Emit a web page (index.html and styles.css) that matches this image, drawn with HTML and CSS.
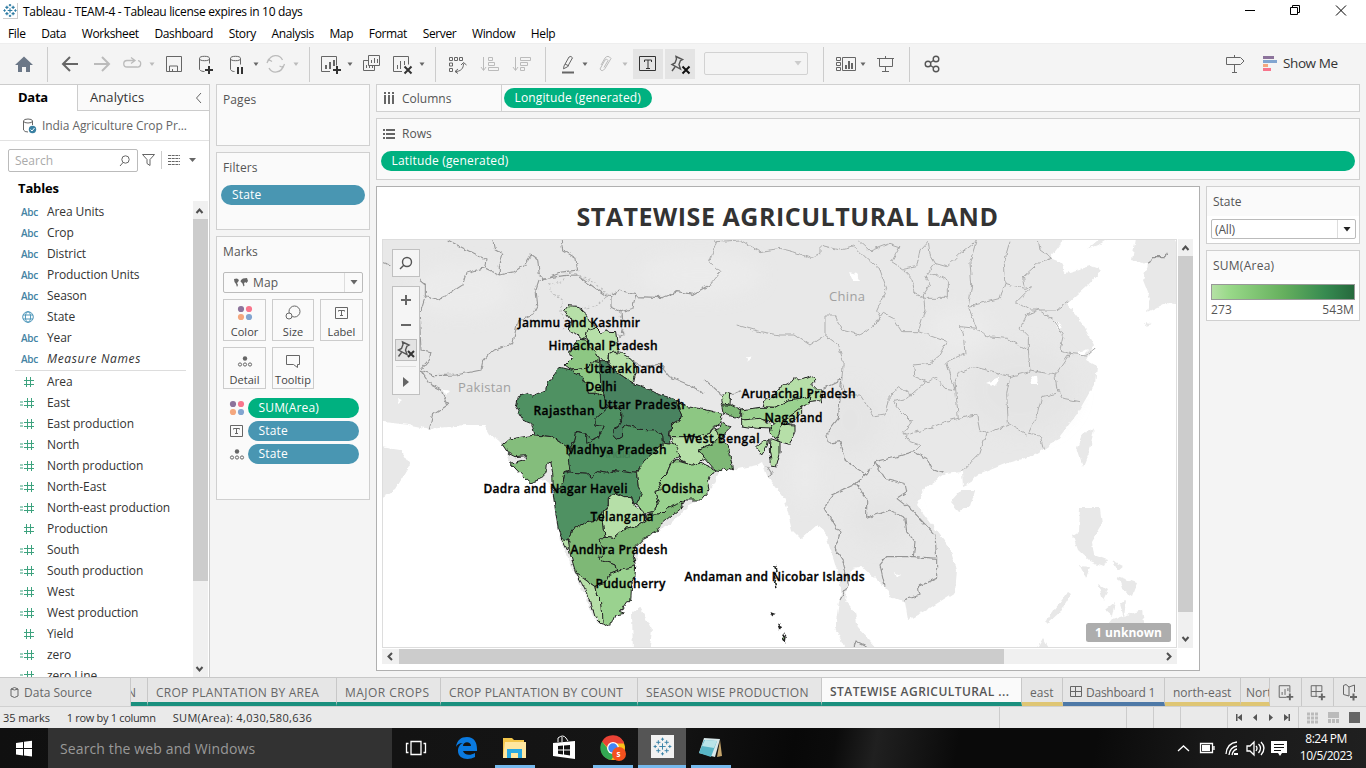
FILE: index.html
```html
<!DOCTYPE html>
<html lang="en">
<head>
<meta charset="utf-8">
<title>Tableau - TEAM-4</title>
<link rel="stylesheet" href="styles.css">
</head>
<body>
<svg class="defs" width="0" height="0">
  <symbol id="num" viewBox="0 0 16 12"><path d="M6.5 1v10M10.500 1v10M4 4.500h10M4 8.500h10"/></symbol>
  <symbol id="calc" viewBox="0 0 16 12"><path d="M7.500 1v10M11.500 1v10M4 4.500h10M4 8.500h10M0 5h3M0 8h3"/></symbol>
  <symbol id="globe" viewBox="0 0 16 12"><circle cx="8" cy="6" r="5.300"/><ellipse cx="8" cy="6" rx="2.600" ry="5.300"/><path d="M3 4h10M3 8h10"/></symbol>
  <symbol id="dots" viewBox="0 0 16 16"><circle cx="4" cy="4" r="3.100" fill="#8c739b"/><circle cx="12" cy="4" r="3.100" fill="#f8758c"/><circle cx="4" cy="12" r="3.100" fill="#f4a77e"/><circle cx="12" cy="12" r="3.100" fill="#82a5d0"/></symbol>
  <symbol id="label" viewBox="0 0 16 16"><path d="M1.500 2.500h12v11h-12zM4.500 6.500v-1h6v1M7.500 5.500v5M6 10.500h3" fill="none" stroke="#666"/></symbol>
  <symbol id="detail" viewBox="0 0 16 16"><circle cx="8" cy="5.500" r="2.200" fill="#666"/><g fill="none" stroke="#666"><circle cx="3" cy="11.500" r="1.600"/><circle cx="8" cy="11.500" r="1.600"/><circle cx="13" cy="11.500" r="1.600"/></g></symbol>
  <symbol id="tableau" viewBox="0 0 18 18"><path d="M9 6v6M6 9h6M5 3v4M3 5h4M13 3v4M11 5h4M5 11v4M3 13h4M13 11v4M11 13h4M9 .500v3M7.500 2h3M9 14.500v3M7.500 16h3M2 7.500v3M.500 9h3M16 7.500v3M14.500 9h3"/></symbol>
</svg>

<header class="titlebar">
  <svg class="logo" viewBox="0 0 18 18"><use href="#tableau"/></svg>
  <span class="title">Tableau - TEAM-4 - Tableau license expires in 10 days</span>
  <svg class="winctl" width="126" height="24" viewBox="1240 0 126 24"><path d="M1245 10.500h10M1290.500 7.500h7v7h-7zM1292.500 7.500v-2h7v7h-2M1336 5.500l10 10M1346 5.500l-10 10"/></svg>
</header>
<nav class="menu"><span>File</span><span>Data</span><span>Worksheet</span><span>Dashboard</span><span>Story</span><span>Analysis</span><span>Map</span><span>Format</span><span>Server</span><span>Window</span><span>Help</span></nav>

<div class="toolbar">
  <svg width="48" height="41" viewBox="0 43 48 41"><path d="M24 56.500l9 8.500h-3v7h-4v-5h-4v5h-4v-7h-3z" fill="#6b7787"/><path class="sep" d="M47.500 47v35"/></svg>
  <svg width="262" height="41" viewBox="48 43 262 41">
    <path class="i w2" d="M78 64H63M70 57l-7 7 7 7"/>
    <path class="l w2" d="M94 64h15M102 57l7 7-7 7"/>
    <path class="l" stroke-width="1.300" d="M134 60.500h-7a3.200 3.200 0 0 0 0 6.500h10a3 3 0 0 0 1-6.300M131 57.500l4 3-4 3"/><path class="lf" d="M149.500 62.500h5l-2.500 3.500z"/>
    <path class="i" d="M166.500 56.500h15v15h-15zM169.500 71v-5h8v5M172.500 71v-2"/>
    <ellipse class="i" cx="204.500" cy="58.500" rx="5" ry="2.200"/><path class="i" d="M199.500 58.500v11c1 1.500 3 2 5 2M209.500 58.500v5"/>
    <path class="k" d="M205 70h8M209 66v8"/>
    <ellipse class="i" cx="235.500" cy="58.500" rx="5" ry="2.200"/><path class="i" d="M230.500 58.500v11c1 1.500 2 2 4 2M240.500 58.500v6"/><path class="k" d="M238 67v7M242 67v7"/><path class="f" d="M253.500 62.500h5l-2.500 3.500z"/>
    <path class="l" stroke-width="1.300" d="M268.500 61a7.500 7.500 0 0 1 14-1M283 66a7.500 7.500 0 0 1-14 2M267 63l1.500-3.500 3.500 2M284.500 64l-1.500 3.500-3.500-1.500"/><path class="lf" d="M293.500 62.500h5l-2.500 3.500z"/>
    <path class="sep" d="M309.500 47v35"/>
  </svg>
  <svg width="126" height="41" viewBox="310 43 126 41">
    <path class="i" d="M330 71.500h-8.500v-15h15v9"/><path class="i w2" d="M326 69v-4M330 69v-7M334 66v-6"/><path class="k" d="M333 70h8M337 66v8"/><path class="f" d="M347.500 62.500h5l-2.500 3.500z"/>
    <path class="i" d="M368.500 55.500h11v10h-11zM371.500 63v-3M374.500 63v-5M377.500 63v-4M368 60.500h-4.500v10h11v-4.500M366.500 68v-3M369.500 68v-2M372.500 68v-2"/>
    <path class="i" d="M402 71.500h-8.500v-15h15v8M397.500 69v-4M400.500 69v-8M404.500 65v-4"/><path class="k" d="M404.500 66.500l7 7M411.500 66.500l-7 7"/><path class="f" d="M419.500 62.500h5l-2.500 3.500z"/>
    <path class="sep" d="M435.500 47v35"/>
  </svg>
  <svg width="110" height="41" viewBox="436 43 110 41">
    <path class="i" d="M449.500 57.500h3v3h-3zM454.500 57.500h3v3h-3zM459.500 57.500h3v3h-3zM449.500 63h3v3h-3zM449.500 68.500h3v3h-3zM455 71.500c6 0 8.500-3 8.500-8M461 65l2.500-2.500 3 2.500M458 69l-3 2.500 3 2"/>
    <path class="l" d="M483.500 57v13M481 67l2.500 3.500 2.500-3.500M488.500 57.500h4v3h-4zM488.500 62.500h6v3h-6zM488.500 67.500h10v3h-10z"/>
    <path class="l" d="M515.500 57v13M513 67l2.500 3.500 2.500-3.500M520.500 57.500h10v3h-10zM520.500 62.500h7v3h-7zM520.500 67.500h4v3h-4z"/>
    <path class="sep" d="M545.500 47v35"/>
  </svg>
  <svg width="87" height="41" viewBox="546 43 87 41">
    <path class="i" d="M564 66l5-9q2-1.500 3.500.8l-5 9-4 2zM565 64l4 2"/><path class="k g6" d="M562 72.500h12"/><path class="f" d="M582.500 62.500h5l-2.500 3.500z"/>
    <path class="l" d="M601 65l4-7q3-3.500 6 .5l-6 10q-3 4-5 .5l5-9q2-2 3 .5l-4 7"/><path class="lf" d="M622.500 62.500h5l-2.500 3.500z"/>
  </svg>
  <svg class="pressed" width="30" height="30" viewBox="633 49 30 30"><path d="M639.500 56.500h16v14h-16zM644.500 62v-2h7v2M648 60v8M646 68.500h4" fill="none" stroke="#333"/></svg>
  <svg class="pressed" width="30" height="30" viewBox="665 49 30 30"><path class="i pin" d="M676 56.500l6.500 3-2 1-1.500 4 1.500 4.500-8.500-4.500 3-1.500 1.500-4zM675 67l-3 4"/><path class="k bk" d="M682.500 66.500l7 7M689.500 66.500l-7 7"/></svg>
  <div class="tbselect"><svg width="8" height="5" viewBox="0 0 8 5"><path d="M.5 0h7L4 4.500z" fill="#ccc"/></svg></div>
  <svg width="102" height="41" viewBox="808 43 102 41">
    <path class="sep" d="M823.500 47v35M909.500 47v35"/>
    <path class="i" d="M836.500 57.500h4v3h-4zM836.500 62.500h4v3h-4zM836.500 67.500h4v3h-4zM842.500 57.500h13v13h-13z"/><path class="i w2" d="M846 69v-4M849 69v-8M852 69v-6"/><path class="f" d="M860.500 62.500h5l-2.500 3.500z"/>
    <path class="i" d="M877 58.500h17M879.500 58.500v8h13v-8M885.500 56v2M885.500 66.500v5M882 71.500h7"/>
  </svg>
  <svg width="40" height="41" viewBox="910 43 40 41"><g class="i pin"><circle cx="928" cy="64" r="2.800"/><circle cx="936" cy="59" r="2.800"/><circle cx="936" cy="69" r="2.800"/><path d="M930.500 62.500l3-2M930.500 65.500l3 2"/></g></svg>
  <svg class="right" width="60" height="41" viewBox="1220 43 60 41"><path class="i" d="M1226.500 57.500h14l3.500 3.500-3.500 3.500h-14zM1234.500 55v2M1234.500 65v7M1232 72.500h5"/><path fill="#8c739b" d="M1263 56h11v3h-11z"/><path fill="#82a5d0" d="M1263 60h14v3h-14z"/><path fill="#f4a77e" d="M1263 64h5v3h-5z"/><path fill="#f8758c" d="M1263 68h8v3h-8z"/></svg>
  <span class="showme">Show Me</span>
</div>

<main class="work">
  <aside class="datapane">
    <div class="ptabs"><b>Data</b><span>Analytics<svg width="8" height="12" viewBox="0 0 8 12"><path class="i" d="M6 1L1.500 6 6 11"/></svg></span></div>
    <div class="source"><svg width="16" height="16" viewBox="0 0 16 16"><ellipse class="i" cx="6" cy="3" rx="4.500" ry="2"/><path class="i" d="M1.500 3v9q1 2 4.500 2M10.500 3v4"/><circle cx="10.500" cy="11.500" r="3.700" fill="#3a81a3"/><path d="M8.500 11.500l1.500 1.500 2.500-3" fill="none" stroke="#fff"/></svg><span>India Agriculture Crop Pr...</span></div>
    <div class="searchrow"><div class="search"><span>Search</span><svg width="12" height="12" viewBox="0 0 12 12"><circle class="i" cx="6.500" cy="4.500" r="3.700"/><path class="i" d="M4 7.500L1 11"/></svg></div>
      <svg width="62" height="23" viewBox="139 149 62 23"><path class="i" d="M142.500 154.500h12l-4.500 5v6l-3-2v-4z"/><path d="M161.500 151v18" stroke="#ccc"/><path class="i" stroke-dasharray="3 .7" d="M168 155.500h12M168 158.500h12M168 161.500h12M168 164.500h12"/><path class="f" d="M189 158h7l-3.500 4z"/></svg></div>
    <h4>Tables</h4>
    <div class="fieldwrap">
      <ul class="fields">
        <li><i>Abc</i>Area Units</li><li><i>Abc</i>Crop</li><li><i>Abc</i>District</li><li><i>Abc</i>Production Units</li><li><i>Abc</i>Season</li>
        <li><svg class="dim"><use href="#globe"/></svg>State</li><li><i>Abc</i>Year</li><li class="it"><i>Abc</i>Measure Names</li>
        <li class="first"><svg><use href="#num"/></svg>Area</li><li><svg><use href="#calc"/></svg>East</li><li><svg><use href="#calc"/></svg>East production</li><li><svg><use href="#calc"/></svg>North</li><li><svg><use href="#calc"/></svg>North production</li><li><svg><use href="#calc"/></svg>North-East</li><li><svg><use href="#calc"/></svg>North-east production</li><li><svg><use href="#num"/></svg>Production</li><li><svg><use href="#calc"/></svg>South</li><li><svg><use href="#calc"/></svg>South production</li><li><svg><use href="#calc"/></svg>West</li><li><svg><use href="#calc"/></svg>West production</li><li><svg><use href="#num"/></svg>Yield</li><li><svg><use href="#calc"/></svg>zero</li><li><svg><use href="#calc"/></svg>zero Line</li>
      </ul>
      <div class="vbar"><svg width="15" height="17" viewBox="0 0 15 17"><path class="chev" d="M3.500 11L6.500 7.500 9.500 11"/></svg><div class="thumb"></div><svg width="15" height="17" viewBox="0 0 15 17"><path class="chev" d="M3.500 7L6.500 10.500 9.500 7"/></svg></div>
    </div>
  </aside>

  <section class="cards">
    <div class="card pages">Pages</div>
    <div class="card filters">Filters<div class="pill blue">State</div></div>
    <div class="card marks">Marks
      <div class="mtype"><svg width="14" height="10" viewBox="0 0 14 10"><path fill="#666" d="M0 1l3-.5L5 2 4 4 3 5l1 2-1 2-1-3L.5 4zM7 2l2-1.500 4-.5 1 3-1.500 2-1.500-1-1 1.500.5 2-1 1-1-3-2-2z"/></svg><span>Map</span><em><svg width="8" height="5" viewBox="0 0 8 5"><path d="M.5 0h7L4 4.500z" fill="#666"/></svg></em></div>
      <div class="mgrid">
        <div><svg><use href="#dots"/></svg>Color</div>
        <div><svg viewBox="0 0 16 16"><circle class="i" cx="9.500" cy="6.500" r="5.500"/><circle class="i lid" cx="4" cy="11" r="3"/></svg>Size</div>
        <div><svg><use href="#label"/></svg>Label</div>
        <div><svg><use href="#detail"/></svg>Detail</div>
        <div><svg viewBox="0 0 16 16"><path class="i" d="M1.500 2.500h13v9h-2v3l-4-3h-7z"/></svg>Tooltip</div>
      </div>
      <div class="enc"><svg><use href="#dots"/></svg><div class="pill green">SUM(Area)</div></div>
      <div class="enc"><svg><use href="#label"/></svg><div class="pill blue">State</div></div>
      <div class="enc"><svg><use href="#detail"/></svg><div class="pill blue">State</div></div>
    </div>
  </section>

  <section class="center">
    <div class="shelf cols"><div class="sl"><svg width="12" height="12" viewBox="0 0 12 12"><path stroke="#666" stroke-width="2" d="M2 0v2M6 0v2M10 0v2M2 3v9M6 3v9M10 3v9"/></svg>Columns</div><div class="pill green">Longitude (generated)</div></div>
    <div class="shelf rows"><div class="sl"><svg width="12" height="12" viewBox="0 0 12 12"><path stroke="#666" stroke-width="2" d="M0 2h2M0 6h2M0 10h2M3 2h9M3 6h9M3 10h9"/></svg>Rows</div><div class="pill green">Latitude (generated)</div></div>
    <div class="lower">
      <div class="viz">
        <h1>STATEWISE AGRICULTURAL LAND</h1>
        <div class="vizgrid">
          <div class="map">
          <svg width="795" height="409" viewBox="382 239 795 409">
            <defs>
              <filter id="rough" filterUnits="userSpaceOnUse" x="370" y="230" width="820" height="430"><feTurbulence type="fractalNoise" baseFrequency=".16" numOctaves="2" seed="4" result="n"/><feDisplacementMap in="SourceGraphic" in2="n" scale="5" xChannelSelector="R" yChannelSelector="G"/></filter>
              <filter id="soft"><feGaussianBlur stdDeviation="9"/></filter>
            </defs>
            <rect x="382" y="239" width="795" height="409" fill="#fff"/>
            <g class="land" filter="url(#rough)">
              <path d="M375 230V421L410 425 430 429 465 425 484 425 489 434 498 440 504 446 512 465 530 483 545 480 552 490 556 520 560 540 575 573 595 620 604 627 612 615 630 600 635 565 645 538 670 525 695 500 712 488 720 470 733 470 757 465 762 462 768 478 785 500 792 530 801 539 817 525 825 532 834 560 842 588 838 608 835 628 847 652H880L858 628 855 612 845 600 848 585 852 570 862 566 874 577 887 590 893 597 905 602 908 620 930 608 955 592 957 570 950 548 930 522 917 505 925 488 945 474 962 472 963 486 970 483 975 476 1005 464 1035 455 1057 440 1077 414 1095 383 1097 366 1086 360 1094 345 1083 325 1067 304 1087 286 1102 270 1090 266 1066 273 1060 262 1050 258 1060 245 1065 230Z"/>
              <path d="M375 446L400 450 410 465 395 490 375 502ZM1132 260L1137 232H1172L1185 255V305L1165 303 1147 312 1150 298 1143 280 1147 264ZM1087 249L1105 235H1115L1100 244ZM632 612L640 607 652 630 649 655H633ZM1077 448L1082 434 1094 428 1090 450 1083 467ZM950 502L960 491 975 491 970 507 958 511ZM1080 508H1100L1102 525 1092 542 1094 555 1107 560 1104 566 1090 561 1078 550 1073 536 1079 532ZM1080 566L1090 567 1086 578ZM1045 622L1068 592 1071 594 1060 612 1047 624ZM1098 584L1108 590 1103 600ZM1117 576L1137 583 1132 596 1122 590ZM1112 560L1124 566 1118 571ZM1105 610L1115 602 1112 616ZM1120 604L1126 600 1124 618ZM1112 620L1142 610 1145 628 1125 634 1104 630ZM1035 652L1043 638 1050 650ZM1144 323L1152 324 1146 326Z"/>
            </g>
            <g class="relief" filter="url(#soft)"><ellipse cx="1020" cy="390" rx="55" ry="45"/><ellipse cx="960" cy="330" rx="30" ry="22" class="hi"/><ellipse cx="460" cy="290" rx="50" ry="25" class="hi"/><ellipse cx="700" cy="275" rx="60" ry="22" class="hi"/><ellipse cx="850" cy="420" rx="30" ry="35"/><ellipse cx="805" cy="475" rx="10" ry="30" class="hi"/><ellipse cx="880" cy="520" rx="30" ry="25"/></g>
            <g filter="url(#rough)">
              <g fill="#fff"><path d="M849 272l8 2 4 7-8 0zM1055 321l7 5-5 4zM1077 352l12-3-6 6zM986 383l14-6-4 9zM1030 376l7 1 1 7-6 0zM443 389l6 2-3 3zM397 398l5 2-4 3zM853 568l12-2-3 5zM895 572l6 4-4 2zM746 357l8 1-6 3z"/></g>
              <!-- Borders of western and central Asia -->
              <g class="bd" transform="translate(376 235) scale(.333333)">
                <path d="M20 82L45 90M130 135L148 150 148 182 185 193 210 182 260 150 270 115 325 98 370 120 415 110 450 85 465 60 485 75 490 120 500 135 550 115 605 108 600 70 560 45 555 12M215 15L330 75 325 98M350 12L355 40 380 55 370 95 370 120M500 132L560 122 600 120 645 150 690 182 705 185 705 215 735 230 740 300 730 305M705 180L730 165 780 180 770 220 735 230M490 135L480 165 485 210 470 240 425 260 410 325 345 350 320 380 315 405 240 420 175 422 135 405M148 182L130 240 135 345 165 350 160 375 135 405 165 450 195 465 215 510 170 540 160 580M780 185L860 188 905 170 950 178 1000 150M740 360L800 395 850 388 880 425 940 450 985 475"/>
                <path class="dash" d="M570 120L560 140 520 150 530 175 560 195 555 230 570 260 560 290M600 120L660 145 695 182 655 215 610 222M730 230L745 300 715 300"/>
              </g>
              <!-- Chinese provinces and Indochina -->
              <g class="pv" transform="translate(780 235) scale(.333333)">
                <path d="M-212 -10L-190 20 -120 15 -60 50 0 40 40 50 95 70 120 55 120 30 180 45 225 35 260 70 300 105 320 160 290 225 300 245 280 275 240 300 185 285 165 240 135 240 135 300 90 330 45 300 0 300 -60 290 -130 270M-190 20L-212 80 -180 110 -212 150M235 15L270 48 330 25 360 35 335 80 370 103 410 95 420 45 445 18 450 60 465 85 435 125 450 150 430 180 435 225 415 290 365 290 340 250 310 235 280 275M370 103L395 130 405 175 435 190 505 190 505 140 465 115 440 120M465 85L500 95 540 55 590 15 570 80 575 150 565 215 590 280 540 275 550 300 555 355 500 380 515 430 525 465 495 460 470 430 440 440 405 425 400 390 450 385 475 365 500 320 415 290M565 215L660 190 675 145 670 90 690 20M675 145L735 160 755 155 710 200 750 225 830 225 865 200M735 155L730 125 780 80 815 70 780 45 775 15M775 225L740 240 720 280 745 305 745 345 750 410 690 425 640 410 580 395 535 415 525 440 535 550 495 560 460 575 380 600 370 595 395 560 355 520 340 500 380 490 440 440M590 280L620 305 680 310 745 345M770 220L825 260 850 300 840 345 870 355 825 420 750 405M825 420L830 460 850 490 900 500M830 475L785 485 770 545 745 595 780 600 790 640M870 355L920 360 945 340M690 425L680 475 685 565 740 600M535 550L590 540 600 590 620 595 685 570M620 590L600 655 545 710M135 300L175 330 190 380 185 440 200 480 240 480 285 545 315 540 325 490 355 455 395 480M370 595L390 620 420 630 400 650"/>
                <path class="bd" d="M185 430L175 550 140 595 145 625 180 620 200 680 260 720 285 680 350 665 400 650 440 670 455 700 490 712M180 435L130 460M260 715L220 750 155 780 135 820 180 895 165 940 190 980 205 1050 180 1095M225 745L260 790 260 850 330 825 375 850 380 890 405 920 400 965 320 965 300 990 315 1055M285 680L315 730 375 745 380 770 350 790 400 830 465 900 470 970 400 965M470 965L470 1030 415 1055 420 1080 370 1095M222 1235L228 1218 265 1236M1105 88L1120 65 1155 65 1162 50"/>
              </g>
              <path class="bd" d="M704 379L722 395 735 393 742 390M767 466L772 474 768 478"/>
            </g>
            <text class="country" x="829" y="301" textLength="36">China</text><text class="country" x="458" y="392" textLength="53">Pakistan</text>
            <!-- Indian states, filled by cultivated area -->
            <g filter="url(#rough)"><g class="st" transform="translate(480 290) scale(.333333)">
              <path class="g under" d="M300 330H440V470H280Z"/>
              <path class="a" d="M251 62L262 47 280 48 298 50 303 63 322 80 330 95 348 112 335 120 322 125 318 140 305 147 285 130 268 120 272 90Z"/>
              <path class="a" d="M322 122L348 114 362 128 378 120 388 127 407 128 412 165 420 185 400 187 385 195 382 215 370 215 355 200 345 185 325 165 318 145Z"/>
              <path class="c" d="M300 145L318 148 325 165 345 185 355 200 360 215 345 212 320 235 275 240 255 225 275 205 268 190 285 160Z"/>
              <path class="a" d="M385 195L400 187 425 190 450 205 468 225 470 240 460 280 430 260 400 240 385 215Z"/>
              <path class="c" d="M275 240L320 235 345 212 360 215 362 285 375 290 368 318 350 310 325 310 320 285 305 270 300 255 282 250Z"/>
              <path class="g" d="M240 232L275 240 282 250 300 255 320 285 325 310 350 310 370 318 385 350 345 385 345 405 370 410 355 445 335 452 320 430 290 425 285 450 270 478 240 455 215 440 165 435 155 400 130 390 108 355 115 320 145 310 155 318 200 300 205 275Z"/>
              <path class="h" d="M360 215L382 215 400 240 430 260 460 280 500 295 540 315 590 330 598 360 605 375 600 390 572 405 568 440 570 462 550 460 548 435 520 420 480 418 440 405 425 415 425 440 412 448 400 435 402 418 415 410 425 385 425 365 410 350 385 350 370 318 362 285Z"/>
              <path class="g" d="M385 350L410 350 425 365 425 385 415 410 402 418 400 435 412 448 425 440 425 415 440 405 480 418 520 420 548 435 550 460 530 480 495 510 480 530 470 550 400 542 380 550 355 545 335 562 320 550 255 545 270 478 285 450 290 425 320 430 320 460 355 445 370 410 345 405 345 385Z"/>
              <path class="g" d="M255 545L320 550 335 562 355 545 380 550 400 542 470 550 475 590 485 610 480 640 462 645 455 620 430 620 405 610 385 625 385 645 370 660 350 690 320 695 275 720 268 745 260 755 245 745 235 720 225 650 218 600 240 590 250 575Z"/>
              <path class="b" d="M550 460L570 462 590 460 595 480 600 500 575 515 560 550 535 575 545 600 525 605 535 640 520 665 490 670 470 640 485 610 475 590 470 550 480 530 495 510 530 480Z"/>
              <path class="d" d="M68 465L90 447 165 435 215 440 240 455 270 478 265 510 270 540 255 545 250 575 240 590 220 600 218 545 212 515 202 522 200 545 175 570 150 578 120 550 92 520 110 515 130 510 140 497 105 500 85 490Z"/>
              <path class="c" d="M590 330L620 350 655 355 700 365 725 370 725 385 715 405 695 415 690 430 650 440 605 440 570 440 572 405 600 390 605 375 598 360Z"/>
              <path class="a" d="M570 440L605 440 650 440 690 430 700 412 710 418 718 440 695 465 655 480 675 505 640 530 595 510 600 500 590 475Z"/>
              <path class="e" d="M725 395L750 410 735 425 725 445 745 470 755 520 757 540 747 535 740 542 732 535 725 542 705 540 675 505 655 480 695 465 718 440 705 420 720 415ZM725 345L755 345 785 360 780 385 750 375 730 370Z"/>
              <path class="a" d="M725 330L740 307 752 310 750 345 728 342Z"/>
              <path class="b" d="M575 515L600 515 635 525 660 520 705 540 690 560 685 575 690 600 665 630 615 630 600 645 560 655 540 675 500 675 520 665 535 640 525 605 545 600 535 575 560 550Z"/>
              <path class="a" d="M385 645L385 625 405 610 430 620 455 620 460 645 490 665 500 690 470 710 430 720 400 745 375 742 370 695 370 660Z"/>
              <path class="e" d="M375 742L400 745 430 720 470 710 500 690 500 675 540 675 560 655 600 640 615 632 600 655 540 705 530 725 490 745 465 770 460 800 467 830 440 835 410 845 405 825 380 815 355 805 370 790 360 745Z"/>
              <path class="e" d="M275 720L320 695 350 690 370 660 370 695 375 742 360 745 370 790 355 805 380 815 405 825 410 845 385 855 375 880 345 890 310 865 288 850 270 790 265 765 268 745Z"/>
              <path class="a" d="M245 745L265 750 268 770 262 780ZM288 850L310 865 345 890 350 920 365 935 370 970 370 1007 345 980 330 930 305 880Z"/>
              <path class="b" d="M345 890L375 880 385 855 410 845 440 835 467 828 465 860 455 880 452 935 440 935 420 965 435 970 405 975 395 1000 370 1008 365 935 350 920Z"/>
              <path class="a" d="M855 330L880 320 895 295 935 275 945 262 965 270 995 258 1008 270 995 285 1010 300 1030 300 1020 330 1025 342 1010 332 985 335 990 318 960 325 925 330 885 352 850 350Z"/>
              <path class="b" d="M785 360L840 352 885 352 925 330 960 325 990 318 985 340 960 355 940 370 925 395 910 420 900 445 885 445 875 430 870 415 885 400 860 390 810 388 785 390Z"/>
              <path class="a" d="M785 390L840 385 870 400 878 417 830 415 785 408ZM925 380L965 350 965 370 940 397 915 405ZM905 402L945 405 945 425 928 463 890 452 900 420ZM870 445L900 455 900 490 890 528 875 525 868 480ZM830 470L850 455 865 448 862 470 845 495 832 480Z"/>
              <path class="b isles" d="M884 828l4 12-3 14 3 12-4 12 4 14M876 970l8 3-4 5zM895 1005l8 4-4 7zM912 1035l6 8-2 12-6-10z"/>
            </g></g>
            <text x="605" y="458" class="country faint" textLength="26">India</text>
            <g class="lb">
              <text x="518" y="327" textLength="122">Jammu and Kashmir</text><text x="548.500" y="350" textLength="109">Himachal Pradesh</text><text x="585" y="373" textLength="78">Uttarakhand</text><text x="585.500" y="391" textLength="31">Delhi</text><text x="598.500" y="409" textLength="86">Uttar Pradesh</text><text x="533.500" y="415" textLength="61">Rajasthan</text><text x="565.500" y="454" textLength="101">Madhya Pradesh</text><text x="683.500" y="443" textLength="76">West Bengal</text><text x="741.500" y="398" textLength="114">Arunachal Pradesh</text><text x="764.500" y="422" textLength="58">Nagaland</text><text x="483.500" y="493" textLength="144">Dadra and Nagar Haveli</text><text x="661.500" y="493" textLength="42">Odisha</text><text x="590.500" y="521" textLength="63">Telangana</text><text x="570.500" y="554" textLength="97">Andhra Pradesh</text><text x="595.500" y="588" textLength="70">Puducherry</text><text x="684.500" y="581" textLength="180">Andaman and Nicobar Islands</text>
            </g>
            <rect x="392.500" y="249.500" width="27" height="27" class="ctl"/><rect x="392.500" y="286.500" width="27" height="108" class="ctl"/><rect x="395.500" y="339.500" width="21" height="21" fill="#e3e3e3" stroke="#bbb"/>
            <g class="i pin"><circle cx="407" cy="262" r="4.500"/><path d="M404 265l-4 4"/><path transform="translate(-273.500 285.500)" d="M676 56.500l6.500 3-2 1-1.500 4 1.500 4.500-8.500-4.500 3-1.500 1.500-4zM675 67l-3 4"/></g>
            <path class="k g6" d="M401 300h10M406 295v10M401 325h10"/><path class="k" d="M408 351l6 6M414 351l-6 6"/><path stroke="#ddd" d="M396 366.500h20"/><path fill="#666" d="M403 377l6 5-6 5z"/>
            <rect x="1086" y="623" width="85" height="19" rx="2.500" fill="#adadad"/><text x="1095" y="637" class="unk" textLength="67">1 unknown</text>
          </svg>
          </div>
          <div class="vbar mapv"><svg width="15" height="17" viewBox="0 0 15 17"><path class="chev" d="M4.500 11L7.500 7.500 10.500 11"/></svg><div class="thumb"></div><svg width="15" height="17" viewBox="0 0 15 17"><path class="chev" d="M4.500 6L7.500 9.500 10.500 6"/></svg></div>
          <div class="hbar"><svg width="17" height="15" viewBox="0 0 17 15"><path class="chev" d="M10 4L6.500 7.500 10 11"/></svg><div class="thumb"></div><svg width="17" height="15" viewBox="0 0 17 15"><path class="chev" d="M7 4l3.500 3.500L7 11"/></svg></div>
        </div>
      </div>
      <div class="side">
        <div class="leg statecard"><p>State</p><div class="dd"><span>(All)</span><em><svg width="8" height="5" viewBox="0 0 8 5"><path d="M.5 0h7L4 4.500z" fill="#222"/></svg></em></div></div>
        <div class="leg area"><p>SUM(Area)</p><div class="ramp"></div><div class="rng"><span>273</span><span>543M</span></div></div>
      </div>
    </div>
  </section>
</main>

<div class="tabs">
  <div class="ds"><svg width="9" height="13" viewBox="0 0 9 13"><path class="i" d="M1 3v7q3.500 3 7 0V3q-3.500-3-7 0q3.500 2 7 0"/></svg>Data Source</div>
  <div class="t nn"><span>N</span></div>
  <div class="t t1">CROP PLANTATION BY AREA</div><div class="t t2">MAJOR CROPS</div><div class="t t3">CROP PLANTATION BY COUNT</div><div class="t t4">SEASON WISE PRODUCTION</div><div class="t on">STATEWISE AGRICULTURAL ...</div><div class="t y t5">east</div><div class="t bl"><svg width="12" height="12" viewBox="0 0 12 12"><path class="i" d="M.5.5h11v10H.5zM5.500.5v10M.5 5.500h11"/></svg>Dashboard 1</div><div class="t y t6">north-east</div><div class="t y t7">Nort</div>
  <svg class="new" viewBox="1270 678 32 28"><path class="i" d="M1287 697.500h-7.500v-12h11v7M1282.500 695v-3M1285.500 695v-6M1288.500 691v-3"/><path class="k g6" d="M1287 697h7M1290.500 693.500v7"/></svg>
  <svg class="new" viewBox="1302 678 32 28"><path class="i" d="M1318 696.500h-6.500v-11h11v6M1316.500 685.500v11M1311.500 691.500h11"/><path class="k g6" d="M1319 697h7M1322.500 693.500v7"/></svg>
  <svg class="new last" viewBox="1334 678 32 28"><path class="i" d="M1349 696l-5.500-1.500v-9l2.500-1 3 2.500 5.500-2v7M1349 687v9"/><path class="k g6" d="M1350 697h7M1353.500 693.500v7"/></svg>
</div>
<footer class="status"><span class="s1">35 marks</span><span class="s2">1 row by 1 column</span><span class="s3">SUM(Area): 4,030,580,636</span>
  <svg width="367" height="21" viewBox="999 707 367 21"><path stroke="#ccc" d="M999.500 707v21M1126.500 707v21M1153.500 707v21M1180.500 707v21M1227.500 707v21M1298.500 707v21"/><path fill="#555" d="M1236 714h1.500v7h-1.500zM1242 714v7l-4.500-3.500zM1257 714v7l-4-3.500zM1269 714v7l4-3.500zM1284 714v7l4.500-3.500zM1288.500 714h1.500v7h-1.500z"/><path stroke="#bbb" stroke-width="3" stroke-dasharray="3 1" d="M1307 714h11M1307 718h11M1307 722h11"/><path fill="#bbb" d="M1328 712h11v6h-11zM1328 719h3v4h-3zM1332 719h3v4h-3zM1336 719h3v4h-3z"/><path fill="#666" d="M1349 712h11v11h-11z"/></svg>
</footer>
<div class="taskbar">
  <svg width="48" height="40" viewBox="0 728 48 40"><path fill="#fff" d="M16 743l7-1v6h-7zM24 741.800l8-1.100v7.300h-8zM16 749h7v6.500l-7-1zM24 749h8v7.500l-8-1.100z"/></svg>
  <div class="winsearch">Search the web and Windows</div>
  <svg width="246" height="40" viewBox="392 728 246 40">
    <path fill="none" stroke="#fff" stroke-width="1.300" d="M411 741.500h10v13h-10zM408.500 743.500h-2v9h2M423.500 743.500h2v9h-2"/>
    <path fill="#0a7ae0" d="M456 747c1-7 5-10 11-10 7 0 10 5 10 12v2h-14c1 4 7 5 12 2v4c-7 4-17 2-17-6 0-4 2-7 5-8-4 0-6 2-7 4zm7-1h8c0-5-8-5-8 0z"/>
    <path fill="#f3c64b" d="M503 738h9l2 2h10v18h-21z"/><path fill="#ffe7a0" d="M505 742h21v16h-23z"/><path fill="#29a9e2" d="M507 749h15v9h-4v-5h-7v5h-4z"/>
    <path fill="#fff" d="M553 743l22-2v18l-22-3z"/><path fill="none" stroke="#fff" d="M558 742v-4q5-4 8 0l2 3M562 742v-5"/><path fill="#111" d="M558 746l5-.5v4h-5zM564 745.500l6-.5v4.500h-6zM558 750.500h5v4l-5-.7zM564 750.500h6v5l-6-1z"/>
    <circle cx="613" cy="748" r="12" fill="#fbc11a"/><path fill="#e94235" d="M613 748h-5l-6-6.500a12.300 12.300 0 0 1 22 1v1h-11z"/><path fill="#33a853" d="M602 741.500a12.300 12.300 0 0 0 9 18.500l5-7-6-1.500z"/><circle cx="613" cy="748" r="6" fill="#fff"/><circle cx="613" cy="748" r="4.700" fill="#4285f4"/><circle cx="619" cy="754" r="7" fill="#f4511e"/><text x="616.500" y="757" fill="#fff" font-size="8" font-weight="bold">s</text>
    <path fill="#76b9ed" d="M495 765h40v3h-40zM593 765h40v3h-40z"/>
  </svg>
  <div class="app"><svg width="23" height="23" viewBox="-2 -2 22 22"><use href="#tableau" width="18" height="18"/></svg></div>
  <svg width="50" height="40" viewBox="686 728 50 40"><path fill="#d8e8ea" d="M704 738l16 1-5 18-16-4z"/><path fill="#58b5c6" d="M704 740l13 1-6 16-12-4z"/><path fill="#b9e4e9" d="M705 740l12 1-3 7-12-2z"/><path fill="#c6a56b" d="M717 757l3-17 2 16z"/><path fill="#76b9ed" d="M691 765h40v3h-40z"/></svg>
  <svg class="right" width="122" height="40" viewBox="1174 728 122 40"><g fill="none" stroke="#fff" stroke-width="1.300"><path d="M1178 751l5.500-5 5.500 5M1200.500 743.500h12v9h-12zM1214 746v4M1226 754q1-11 11-12M1229 755q1-8 8-9M1232 755q1-5 5-6M1247 746h3l4-4v13l-4-4h-3zM1256 746q2 2 0 5M1258.500 744q4 4 0 9M1261 742q6 6 0 13"/></g><path fill="#fff" d="M1202 745h8v6h-8zM1234 753h4v2h-4zM1271 741h16v12h-5l-2 3-2-3h-7z"/><path stroke="#111" d="M1274 744.500h10M1274 747.500h10M1274 750.500h7"/></svg>
  <div class="clock">8:24 PM<br>10/5/2023</div>
</div>
</body>
</html>
```
FILE: styles.css
```css
* { box-sizing: border-box; }
body { margin: 0; width: 1366px; height: 768px; overflow: hidden; background: #f4f4f4; font: 12px/15px "Open Sans", sans-serif; color: #333; display: flex; flex-direction: column; }
.defs { position: absolute; }
svg { flex: none; display: block; }
h1, h4, p, ul { margin: 0; padding: 0; }
.i { fill: none; stroke: #666; }
.pin { stroke-width: 1.400; stroke: #555; }
.lid { fill: #fafafa; }
.l { fill: none; stroke: #bbb; }
.w2 { stroke-width: 2; }
.f { fill: #666; }
.lf { fill: #bbb; }
.k { fill: none; stroke: #333; stroke-width: 2; }
.g6 { stroke: #666; }
.bk { stroke: #111; }
.sep { stroke: #ccc; }
.chev { fill: none; stroke: #505050; stroke-width: 2; }

.titlebar { height: 24px; background: #fff; display: flex; align-items: center; padding-left: 3px; color: #000; flex: none; }
.logo { width: 15px; height: 16px; border: 1px solid #ccc; border-width: 0 1px 1px 0; stroke: #2f7ca3; stroke-width: 1.500; margin-top: -2px; }
.title { margin: -1px 0 0 5px; font-size: 12px; letter-spacing: -.31px; }
.winctl { margin-left: auto; fill: none; stroke: #000; }
.menu { height: 19px; background: #fff; display: flex; gap: 15.7px; padding: 2px 0 0 8px; color: #000; font-size: 12px; letter-spacing: -.37px; flex: none; }
.toolbar { height: 41px; display: flex; align-items: center; border-top: 1px solid #eee; flex: none; }
.toolbar > svg { margin-top: -1px; }
.toolbar .pressed { background: #e4e4e4; margin-right: 2px; }
.tbselect { width: 104px; height: 23px; margin: -1px 0 0 7px; border: 1px solid #d2d2d2; border-radius: 2px; display: flex; justify-content: flex-end; align-items: center; padding-right: 5px; }
.toolbar .right { margin-left: auto; }
.showme { width: 86px; padding-left: 3px; margin-top: -1px; font-size: 13.500px; letter-spacing: -.4px; white-space: nowrap; }

.work { height: 593px; display: flex; flex: none; }
.datapane { width: 210px; background: #fff; border-right: 1px solid #ccc; display: flex; flex-direction: column; }
.ptabs { height: 27px; display: flex; font-size: 13px; line-height: 25px; border-top: 1px solid #ccc; flex: none; }
.ptabs b { width: 77px; padding-left: 18px; color: #000; letter-spacing: -.25px; }
.ptabs span { flex: 1; background: #fafafa; border-left: 1px solid #ccc; border-bottom: 1px solid #ccc; padding: 0 6px 0 12px; display: flex; justify-content: space-between; align-items: center; letter-spacing: .07px; }
.source { height: 30px; border-bottom: 1px solid #e2e2e2; display: flex; align-items: center; gap: 4px; padding-left: 22px; color: #666; letter-spacing: -.08px; flex: none; }
.searchrow { height: 36px; padding: 8px 0 0 8px; display: flex; gap: 1px; flex: none; }
.search { width: 130px; height: 23px; border: 1px solid #bbb; border-radius: 2px; padding: 0 6px; display: flex; align-items: center; justify-content: space-between; color: #aaa; }
h4 { font-size: 13px; line-height: 23px; padding-left: 18px; height: 24px; color: #000; letter-spacing: -.15px; flex: none; }
.fieldwrap { flex: 1; min-height: 0; display: flex; justify-content: space-between; overflow: hidden; }
.fields { list-style: none; width: 186px; margin-left: 15px; letter-spacing: -.09px; }
.fields li { height: 21px; display: flex; align-items: center; padding-left: 5px; white-space: nowrap; line-height: 20px; }
.fields li.it { font-style: italic; letter-spacing: .65px; }
.fields i { font: 600 10px/14px "Open Sans", sans-serif; color: #4483a3; width: 27px; padding-left: 1px; letter-spacing: -.3px; }
.fields svg { width: 16px; height: 12px; margin-right: 11px; fill: none; stroke: #3da27e; }
.fields svg.dim { stroke: #4e97ba; }
.fields .first { border-top: 1px solid #ddd; margin-top: 1px; height: 22px; width: 171px; }
.vbar { width: 15px; background: #f0f0f0; display: flex; flex-direction: column; }
.vbar .thumb { background: #ccc; flex: none; }
.datapane .vbar { padding-top: 1px; width: 16px; border-right: 1px solid #fff; }
.datapane .vbar .thumb { height: 362px; }
.vbar svg:last-child { margin-top: auto; }

.cards { width: 154px; margin-left: 6px; display: flex; flex-direction: column; gap: 6px; }
.card { border: 1px solid #d0d0d0; background: #fafafa; padding: 7px 4px 0 6px; color: #555; letter-spacing: .1px; }
.pages { height: 62px; }
.filters { height: 78px; }
.marks { height: 264px; }
.pill { height: 20px; border-radius: 10px; color: #fff; line-height: 19px; padding-left: 11px; letter-spacing: .15px; white-space: nowrap; }
.green { background: #00b180; }
.blue { background: #4996b2; }
.filters .pill { margin: 10px 0 0 -2px; }
.mtype { height: 21px; width: 140px; border: 1px solid #bbb; border-radius: 2px; margin-top: 13px; display: flex; align-items: center; padding-left: 10px; gap: 5px; color: #555; }
em { font-style: normal; margin-left: auto; width: 18px; height: 100%; border-left: 1px solid #ddd; display: grid; place-items: center; }
.mgrid { display: grid; grid-template-columns: 43px 42px 43px; gap: 6px; margin-top: 6px; width: 140px; }
.mgrid div { height: 42px; border: 1px solid #ccc; display: flex; flex-direction: column; align-items: center; gap: 3px; padding-top: 5px; font-size: 11px; color: #444; letter-spacing: .05px; }
.mgrid svg, .enc svg { width: 16px; height: 16px; }
.enc { display: flex; align-items: center; gap: 3px; margin: 3px 0 0 6px; }
.enc .pill { width: 111px; padding-left: 10.500px; }
.mgrid + .enc { margin-top: 9px; }

.center { margin-left: 6px; width: 984px; display: flex; flex-direction: column; gap: 6px; }
.shelf { border: 1px solid #d0d0d0; background: #fafafa; }
.sl { display: flex; align-items: center; gap: 7px; padding-left: 6px; color: #555; }
.cols { height: 28px; display: flex; align-items: center; gap: 2px; }
.cols .sl { width: 125px; height: 26px; border-right: 1px solid #d0d0d0; }
.cols .pill { width: 148px; padding-left: 10.500px; letter-spacing: .14px; }
.rows { height: 62px; }
.rows .sl { height: 29px; }
.rows .pill { margin: 3px 4px; padding-left: 10.500px; letter-spacing: .18px; }
.lower { display: flex; gap: 6px; height: 485px; }
.viz { width: 824px; border: 1px solid #b0b0b0; background: #fff; padding-left: 5px; }
h1 { height: 52px; padding: 11px 6px 0 0; text-align: center; font: 700 25px/36px "Open Sans", sans-serif; letter-spacing: .53px; color: #333; }
.vizgrid { display: grid; grid-template-columns: 795px 17px; grid-template-rows: 409px 17px; }
.map { overflow: hidden; outline: 1px solid #ddd; outline-offset: -1px; }
.mapv { margin-left: 1px; width: 15px; }
.mapv .thumb { height: 356px; }
.hbar { height: 15px; margin: 1px 0 0; background: #f0f0f0; display: flex; align-items: center; justify-content: space-between; }
.hbar .thumb { width: 605px; height: 15px; background: #ccc; margin-right: auto; }
.land path { fill: #e8e8e8; }
.relief { fill: #e3e3e3; opacity: .6; }
.relief .hi { fill: #eee; }
.bd path, path.bd { fill: none; stroke: #999; stroke-width: 1.100; vector-effect: non-scaling-stroke; }
.bd .dash { stroke: #bbb; stroke-dasharray: 2 2; }
.pv path { fill: none; stroke: #adadad; vector-effect: non-scaling-stroke; }
.pv path.bd { stroke: #949494; }
.st path { stroke: #222; stroke-width: 1; vector-effect: non-scaling-stroke; }
.st .under { stroke: none; }
.st .isles { stroke-width: 1.500; }
.a { fill: #b6dfa8; }
.b { fill: #9ad28f; }
.c { fill: #8dc783; }
.d { fill: #84bd7b; }
.e { fill: #7eb876; }
.g { fill: #4f9162; }
.h { fill: #4a8361; }
.country { font: 13px "Open Sans", sans-serif; fill: #a0a0a0; }
.faint { fill: #437f55; }
.lb text { font: 600 12px "Open Sans", sans-serif; fill: #000; stroke: #000; stroke-width: .3; }
.ctl { fill: #f5f5f5; stroke: #c0c0c0; }
.unk { font: 700 12px "Open Sans", sans-serif; fill: #fff; }
.side { width: 154px; display: flex; flex-direction: column; gap: 6px; }
.leg { border: 1px solid #d0d0d0; background: #fff; }
.leg p { height: 29px; background: #fafafa; padding: 7px 0 0 6px; color: #555; }
.statecard { height: 58px; }
.area { height: 71px; }
.area p { letter-spacing: .25px; }
.dd { height: 20px; margin: 3px 3px 0 4px; border: 1px solid #bbb; border-radius: 2px; display: flex; align-items: center; padding-left: 3px; color: #555; letter-spacing: -.15px; }
.ramp { margin: 4px 4px 0; height: 16px; border: 1px solid #999; background: linear-gradient(90deg, #b5e1a5, #99d989 12%, #66b05e 50%, #368a50 80%, #26693d); }
.rng { display: flex; justify-content: space-between; padding: 2px 5px 0 4px; color: #555; letter-spacing: .1px; }

.tabs { height: 30px; display: flex; background: #e6e6e6; border-top: 1px solid #c8c8c8; border-bottom: 1px solid #d0d0d0; flex: none; color: #666; }
.tabs > div { display: flex; align-items: center; white-space: nowrap; overflow: hidden; flex: none; }
.ds { width: 131px; padding-left: 10px; gap: 5px; border-right: 1px solid #c8c8c8; }
.t { border-right: 1px solid #c8c8c8; border-bottom: 4px solid #1a907e; padding: 4px 0 0 8px; }
.nn { width: 17px; padding-left: 0; justify-content: flex-start; }
.nn span { margin-left: -4px; }
.t1 { width: 189px; letter-spacing: .25px; }
.t2 { width: 104px; letter-spacing: .45px; }
.t3 { width: 197px; letter-spacing: .2px; }
.t4 { width: 184px; letter-spacing: .26px; }
.tabs > .on { width: 200px; background: #fafafa; font-weight: 600; letter-spacing: .44px; color: #555; padding-top: 3px; }
.t5 { width: 41px; }
.y { border-bottom-color: #dfc674; }
.bl { width: 102px; border-bottom-color: #4e79a7; gap: 4px; padding-left: 7px; letter-spacing: -.25px; }
.t6 { width: 76px; }
.t7 { width: 29px; padding-left: 5px; }
.new { width: 32px; height: 28px; border-right: 1px solid #c8c8c8; }
.last { border: 0; }
.status { height: 21px; background: #eaeaea; display: flex; align-items: center; padding-left: 3px; gap: 17px; font-size: 11px; flex: none; color: #333; }
.s1 { letter-spacing: -.05px; }
.s2 { letter-spacing: -.32px; }
.s3 { letter-spacing: .34px; }
.status svg { margin-left: auto; }
.taskbar { height: 40px; display: flex; background: linear-gradient(100deg, #101010 0, #151515 48%, #080808 58%, #0b0b0b 61%, #202020 64%, #0a0a0a 70%, #0a0a0a 80%, #181818 88%, #202020); flex: none; font-family: "Open Sans", sans-serif; color: #fff; }
.winsearch { width: 344px; background: #323232; color: #999; padding-left: 12px; font-size: 14px; line-height: 41px; letter-spacing: .12px; }
.app { width: 48px; background: #555; border-bottom: 3px solid #76b9ed; display: grid; place-items: center; }
.app svg { background: #f2f2f2; stroke: #3580a5; fill: none; stroke-width: .9; }
.taskbar .right { margin-left: auto; }
.clock { width: 70px; padding: 2px 10px 0 0; text-align: center; font-size: 12px; line-height: 17px; letter-spacing: -.5px; }
```
